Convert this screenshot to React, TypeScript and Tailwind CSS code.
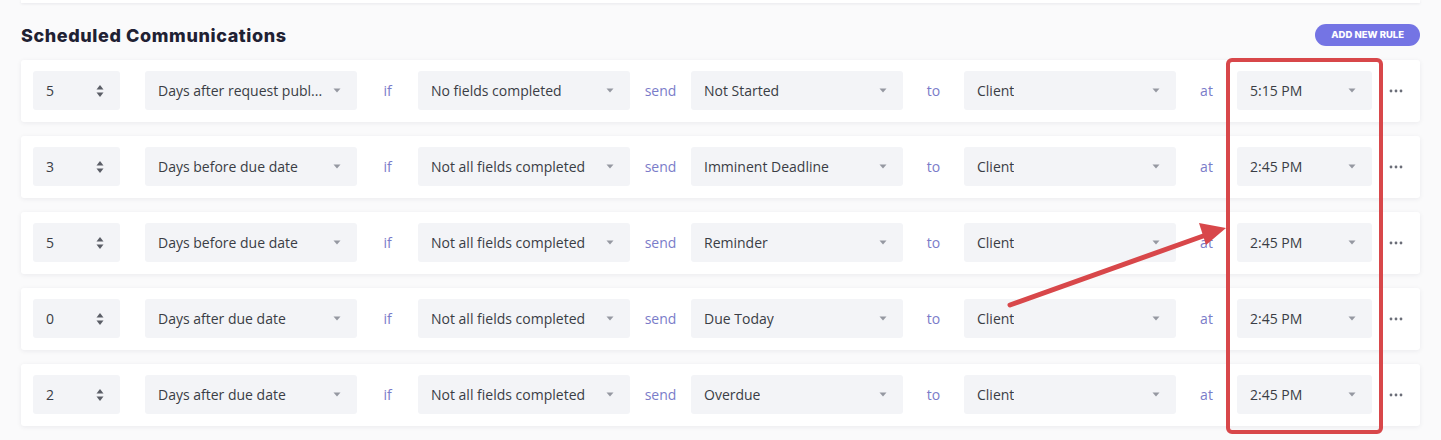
import React from "react";

interface Rule {
  offset: number;
  when: string;
  cond: string;
  template: string;
  to: string;
  at: string;
}

const rules: Rule[] = [
  { offset: 5, when: "Days after request publ...", cond: "No fields completed", template: "Not Started", to: "Client", at: "5:15 PM" },
  { offset: 3, when: "Days before due date", cond: "Not all fields completed", template: "Imminent Deadline", to: "Client", at: "2:45 PM" },
  { offset: 5, when: "Days before due date", cond: "Not all fields completed", template: "Reminder", to: "Client", at: "2:45 PM" },
  { offset: 0, when: "Days after due date", cond: "Not all fields completed", template: "Due Today", to: "Client", at: "2:45 PM" },
  { offset: 2, when: "Days after due date", cond: "Not all fields completed", template: "Overdue", to: "Client", at: "2:45 PM" },
];

const Caret = () => (
  <svg width="8" height="5" viewBox="0 0 8 5" className="shrink-0">
    <path d="M0.5 0.5h7L4 4.5z" fill="#9598a1" />
  </svg>
);

const Select = ({ value, w }: { value: string; w: string }) => (
  <div className={`${w} h-[39px] shrink-0 rounded-[3px] bg-[#f3f4f7] pl-[13px] pr-[16px] flex items-center justify-between`}>
    <span className="truncate text-[14px] text-[#3a3d45]">{value}</span>
    <Caret />
  </div>
);

const Word = ({ children }: { children: React.ReactNode }) => (
  <div className="w-[61px] shrink-0 text-center text-[14px] leading-[39px] text-[#7a7cc9]">{children}</div>
);

const RuleRow = ({ rule }: { rule: Rule }) => (
  <div className="h-[62px] bg-white rounded-[3px] shadow-[0_1px_5px_rgba(30,30,60,0.07)] pl-[12px] pt-[11px] flex items-start">
    <div className="w-[87px] h-[39px] shrink-0 rounded-[3px] bg-[#f3f4f7] pl-[13px] pr-[16px] flex items-center justify-between">
      <span className="text-[14px] text-[#3a3d45]">{rule.offset}</span>
      <svg width="8" height="14" viewBox="0 0 8 14">
        <path d="M4 1L7.5 5.5h-7z" fill="#5a5d66" />
        <path d="M4 13L7.5 8.5h-7z" fill="#5a5d66" />
      </svg>
    </div>
    <div className="w-[25px] shrink-0" />
    <Select value={rule.when} w="w-[212px]" />
    <Word>if</Word>
    <Select value={rule.cond} w="w-[212px]" />
    <Word>send</Word>
    <Select value={rule.template} w="w-[212px]" />
    <Word>to</Word>
    <Select value={rule.to} w="w-[212px]" />
    <Word>at</Word>
    <Select value={rule.at} w="w-[135px]" />
    <div className="w-[48px] h-[39px] shrink-0 flex items-center justify-center">
      <svg width="14" height="4" viewBox="0 0 14 4">
        <circle cx="2" cy="2" r="1.4" fill="#6b6e78" />
        <circle cx="7" cy="2" r="1.4" fill="#6b6e78" />
        <circle cx="12" cy="2" r="1.4" fill="#6b6e78" />
      </svg>
    </div>
  </div>
);

export default function App() {
  return (
    <div className="relative w-[1441px] h-[440px] overflow-hidden bg-[#fafafb] px-[21px]" style={{ fontFamily: '"Open Sans", "Noto Sans", sans-serif' }}>
      <div className="h-[3px] bg-white shadow-[0_1px_3px_rgba(30,30,60,0.08)]" />

      <div className="h-[57px] flex items-center justify-between pt-[7px]">
        <h2 className="text-[18px] font-extrabold text-[#1f2133] tracking-[0.6px]" style={{ fontFamily: 'Inter, "Noto Sans", sans-serif' }}>
          Scheduled Communications
        </h2>
        <button className="h-[22px] px-[16px] rounded-full bg-[#7474e4] text-white text-[9.5px] font-extrabold" style={{ fontFamily: 'Inter, "Noto Sans", sans-serif' }}>
          ADD NEW RULE
        </button>
      </div>

      <div className="flex flex-col gap-[14px]">
        {rules.map((r, i) => (
          <RuleRow key={i} rule={r} />
        ))}
      </div>

      {/* annotation overlay */}
      <div className="absolute left-[1226px] top-[58px] w-[157px] h-[376px] border-[4px] border-[#d8474a] rounded-[6px]" />
      <svg className="absolute left-0 top-0" width="1441" height="440" viewBox="0 0 1441 440">
        <line x1="1010" y1="305" x2="1206" y2="235" stroke="#d8474a" strokeWidth="5" strokeLinecap="round" />
        <path d="M1226 228 L1199 223 L1206 245 Z" fill="#d8474a" />
      </svg>
    </div>
  );
}
